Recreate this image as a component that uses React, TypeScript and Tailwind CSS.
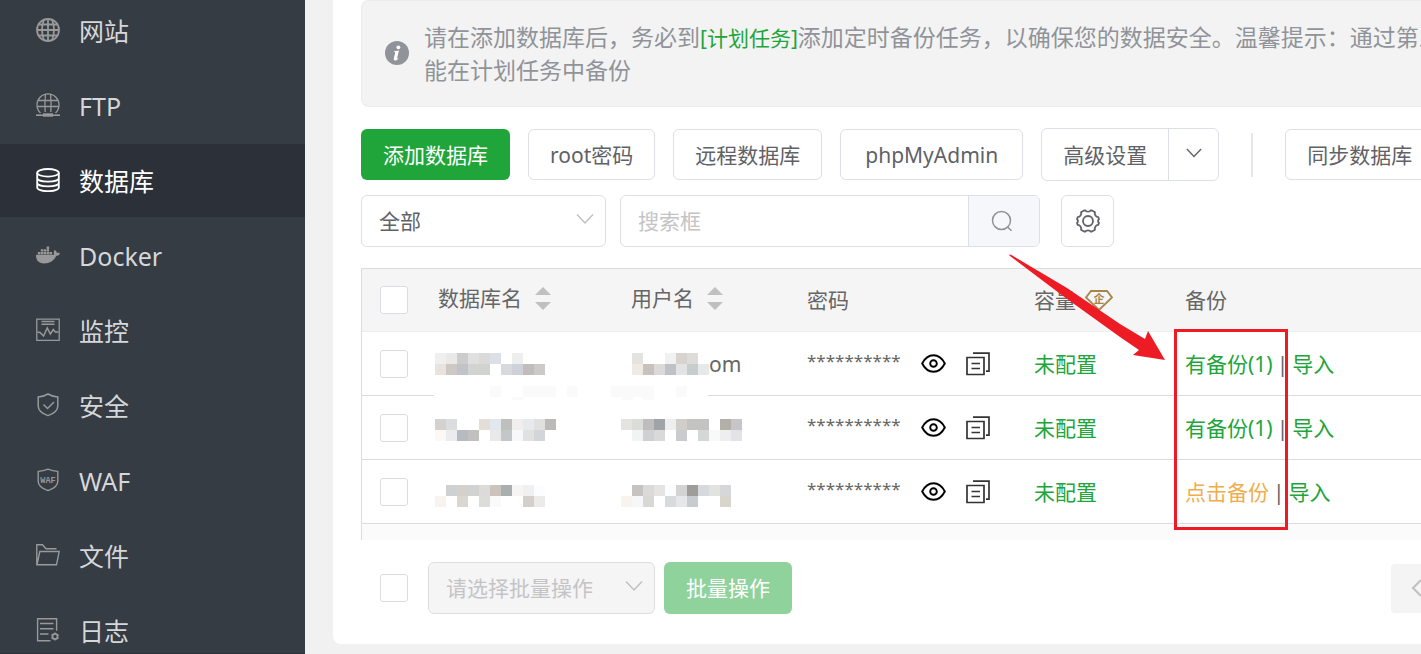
import React, { useState } from 'react';
import { FaDocker } from 'react-icons/fa';

type Cell = string | null;

interface Database {
  id: number;
  name: Cell[][];
  user: Cell[][];
  suffix?: string;
  backups: number;
}

const databases: Database[] = [
  {
    id: 1,
    name: [
      ['#efefef', '#e9e9e9', '#cdcccc', '#e0e0e0', '#dbdad9', '#dce0e6', null, '#eeeeee'],
      ['#e8e3df', '#cdc8c4', '#c0c3c7', '#d3d4d2', '#d0d3d0', null, '#d7d9dd', '#ced1d7', '#bfbebc', '#cbcac8'],
    ],
    user: [
      [null, '#e3e3e2', null, null, '#f1f1f1', '#d8d3cf', '#dddcd9'],
      [null, '#eeebe4', '#c7c3bc', '#dbdad8', '#bfc1c6', '#e2e3e4', '#c7cccd', '#e7e8ea'],
    ],
    suffix: 'om',
    backups: 1,
  },
  {
    id: 2,
    name: [
      ['#d3d2d0', '#dadcde', null, null, '#e3ded8', '#e3e8f0', '#bfbfbe', '#f0efee', '#e7eaec', '#e0e0e0', '#bbbab8'],
      ['#fef8f4', '#ebecee', '#b7bac0', '#c2c1bf', null, '#e9e9e9', '#c3c7c8', '#f6f8fa', '#e0e1e1', '#d2d6d9'],
    ],
    user: [
      ['#e4e3e0', '#dcdcdb', '#bfbebc', '#a0a4a8', '#eeeeef', '#d1cdc9', '#c3c3c1', '#c3c3c1', null, '#b3b0aa', '#c7c5c7'],
      [null, '#f2f4f3', '#cfd0d2', '#d9d9d9', null, '#c9cbce', null, '#d5d7d6', '#f8f9f9', '#eeeeee', '#e2e2e7'],
    ],
    backups: 1,
  },
  {
    id: 3,
    name: [
      [null, '#cfd0d1', '#d4d0cc', '#d0d3d1', '#dcdbd7', '#cac4bc', '#a9afb0', '#f7f5f3', '#f0f0f0', '#fcfdfe'],
      ['#f8f3ee', null, '#dad6d1', null, '#dcdcdb', '#fafafa', null, null, '#d3cfca', '#ecebe9'],
    ],
    user: [
      [null, '#c5c4c2', '#dadada', '#e5e4e2', '#fbfcfe', '#d3d3d3', '#9e9d9a', '#d8d9db', '#e2e3df', '#d5d7d8'],
      ['#f7f3ed', '#f5f7f8', '#d8d8d7', null, '#d8dadd', '#e5e7e9', '#c9ccce', null, null, '#d8d4ce'],
    ],
    backups: 0,
  },
];

const iconProps = {
  viewBox: '0 0 24 24',
  className: 'w-6 h-6 mb-0.5 shrink-0',
  fill: 'none',
  stroke: 'currentColor',
  'aria-hidden': true,
};

const GlobeIcon = () => (
  <svg {...iconProps} strokeWidth={1.8}>
    <circle cx="12" cy="12" r="11" />
    <path d="M12 1v22M1 12h22M2.500 6.500h19M2.500 17.500h19M8 1.500C5.500 8 5.500 16 8 22.500M16 1.500c2.500 6.500 2.500 14.500 0 21" />
  </svg>
);

const FtpIcon = () => (
  <svg {...iconProps} strokeWidth={1.3}>
    <path d="M4.500 20A11 11 0 1 1 19.500 20M9.500 1.500C8.800 7 8.800 14 9.200 19M14.500 1.500c.7 5.500.7 12.500.3 17.500M2 7.500h20M1 13.500h22" />
    <path d="M0 22.200h24" strokeWidth={1.600} />
    <path d="M7 22h10" strokeWidth={3.400} />
  </svg>
);

const DatabaseIcon = () => (
  <svg {...iconProps} strokeWidth={1.8}>
    <ellipse cx="12" cy="4.800" rx="10.800" ry="3.800" />
    <path d="M1.200 4.800v14.600c0 2.200 4.800 3.800 10.800 3.800s10.800-1.600 10.800-3.800V4.800M1.200 10c0 2.100 4.800 3.600 10.800 3.600S22.800 12.100 22.800 10M1.200 14.800c0 2.100 4.800 3.600 10.800 3.600s10.800-1.500 10.800-3.600" />
  </svg>
);

const MonitorIcon = () => (
  <svg {...iconProps} strokeWidth={1.3}>
    <path d="M.8 1.200h22.400v21.200H.8z" />
    <path d="M5.500 3.500h13M5.500 6.200h13" strokeWidth={1.600} />
    <path d="M1.500 14l2.500.5 3.500 3.500 3.800-8 3 6 3-4.500 2 2.500h3.200" strokeWidth={1.500} />
  </svg>
);

const ShieldIcon = () => (
  <svg {...iconProps} strokeWidth={1.5}>
    <path d="M12 1c3 1.800 6.500 2.800 9.800 3v9c0 4.500-5 8-9.800 9.600C7.200 21 2.200 17.500 2.200 13V4C5.500 3.800 9 2.800 12 1z" />
    <path d="M7.500 11.500l4 4 6.500-6.500" />
  </svg>
);

const WafIcon = () => (
  <svg {...iconProps} strokeWidth={1.4}>
    <path d="M12 1.200c3 1.200 6.500 2 9.800 2.200v10c0 4.500-5 7.500-9.800 9.300-4.800-1.800-9.800-4.800-9.800-9.300v-10c3.300-.2 6.800-1 9.800-2.200z" />
    <text x="12" y="14.500" textAnchor="middle" fontSize="8.500" fontWeight="700" fontFamily="Liberation Mono, monospace" fill="currentColor" stroke="none">
      WAF
    </text>
  </svg>
);

const FolderIcon = () => (
  <svg {...iconProps} strokeWidth={1.4}>
    <path d="M20.500 5.800H10L6.500 1.800H.8v20H20.500L23.200 8.500H3.800L1 21.800" />
  </svg>
);

const LogIcon = () => (
  <svg {...iconProps} strokeWidth={1.4}>
    <path d="M14.500 22.800H1.600V.8h19v12M4 5.500h13.500M4 10.800h13.500M4 16h8.500" />
    <circle cx="19" cy="18.500" r="2.600" strokeWidth={1.800} />
    <path d="M19 14.500v1.500M19 21v1.500M15.500 16.500l1.300.8M21.200 19.700l1.300.8M15.500 20.500l1.300-.8M21.200 17.300l1.300-.8" />
  </svg>
);

const menu = [
  { label: '网站', icon: <GlobeIcon /> },
  { label: 'FTP', icon: <FtpIcon /> },
  { label: '数据库', icon: <DatabaseIcon />, active: true },
  { label: 'Docker', icon: <FaDocker className="w-6 h-6 mb-0.5 shrink-0" /> },
  { label: '监控', icon: <MonitorIcon /> },
  { label: '安全', icon: <ShieldIcon /> },
  { label: 'WAF', icon: <WafIcon /> },
  { label: '文件', icon: <FolderIcon /> },
  { label: '日志', icon: <LogIcon /> },
];

const Sidebar: React.FC = () => (
  <aside className="w-[305px] shrink-0 bg-[#353c44] overflow-hidden border-b border-[#2c3038]">
    <nav className="-mt-1.5 flex flex-col gap-0.5">
      {menu.map((item) => (
        <a
          key={item.label}
          href="#"
          className={`flex items-center gap-[19px] h-[73px] shrink-0 pl-9 text-[25px] ${
            item.active ? 'bg-[#2c3038] text-white' : 'text-[#999999]'
          }`}
        >
          {item.icon}
          <span className={item.active ? 'text-white' : 'text-[#d6d7d9]'}>{item.label}</span>
        </a>
      ))}
    </nav>
  </aside>
);

const Chevron: React.FC<{ className?: string }> = ({ className }) => (
  <svg viewBox="0 0 18 12" className={className} fill="none" stroke="currentColor" strokeWidth={1.5} aria-hidden="true">
    <path d="M1 1.500l8 8.500 8-8.500" />
  </svg>
);

// the 11px grid runs over the whole table, so it drifts against the 64px rows
const Mosaic: React.FC<{ rows: Cell[][]; shift: number }> = ({ rows, shift }) => {
  const cols = Math.max(...rows.map((r) => r.length));
  return (
    <svg width={cols * 11} height={rows.length * 11} className="shrink-0 overflow-visible" shapeRendering="crispEdges" aria-hidden="true">
      {rows.map((row, y) =>
        row.map((fill, x) => fill && <rect key={`${x}-${y}`} x={x * 11} y={y * 11 + shift} width={11} height={11} fill={fill} />)
      )}
    </svg>
  );
};

const SortIcon = () => (
  <svg width="16" height="23" viewBox="0 0 16 23" fill="#c0c0c0" aria-hidden="true">
    <path d="M8 0l8 8H0zM8 23l8-8H0z" />
  </svg>
);

const Checkbox: React.FC<{ label: string }> = ({ label }) => (
  <input
    type="checkbox"
    aria-label={label}
    className="block appearance-none w-7 h-7 shrink-0 rounded-[3px] border border-[#dcdce6] bg-white checked:bg-[#20a53a]"
  />
);

const buttonClass = 'h-[51px] shrink-0 rounded-md border border-[#dcdfe6] bg-white text-[#606266]';

const App: React.FC = () => {
  const [filter, setFilter] = useState('全部');
  const [keyword, setKeyword] = useState('');

  return (
    <div
      className="flex h-screen overflow-hidden bg-[#f1f1f2] text-[21px] leading-8 text-[#666666] whitespace-nowrap"
      style={{ fontFamily: '"Noto Sans", "Noto Sans CJK SC", sans-serif' }}
    >
      <Sidebar />

      <main className="flex-1 min-w-0 pl-7">
        <div className="relative pl-7 pb-[30px] bg-white rounded-bl-lg overflow-hidden">
          <div className="flex items-center gap-[15px] pl-[23px] py-5 border border-r-0 border-[#ebebeb] rounded-l-lg bg-[#f3f3f3] text-[23px] text-[#909399]">
            <svg width="24" height="24" viewBox="0 0 24 24" className="mb-0.5 shrink-0" aria-hidden="true">
              <circle cx="12" cy="12" r="12" fill="#909399" />
              <circle cx="13.400" cy="6.300" r="1.900" fill="#fff" />
              <path d="M9.200 10.200l4.800-.7-1.900 7.600c-.2.900.4.800 1.800-.6-.9 2-2.300 3-3.700 2.900-1.300-.1-1.700-1-1.300-2.500l1.200-4.700c.2-.8-.1-1-1.200-1.200z" fill="#fff" />
            </svg>
            <p>
              请在添加数据库后，务必到
              <a href="#" className="text-[21px] text-[#20a53a]">[计划任务]</a>
              添加定时备份任务，以确保您的数据安全。温馨提示：通过第三
              <br />
              能在计划任务中备份
            </p>
          </div>

          <div className="mt-[21px] flex items-center gap-[18px]">
            <button className="h-[51px] px-[22px] shrink-0 rounded-md bg-[#20a53a] text-white">添加数据库</button>
            <button className={`${buttonClass} px-[21px]`}>root密码</button>
            <button className={`${buttonClass} px-[21px]`}>远程数据库</button>
            <button className={`${buttonClass} px-6`}>phpMyAdmin</button>
            <div className="flex h-[53px] shrink-0 rounded-md border border-[#dcdfe6] text-[#606266]">
              <button className="px-[21px]">高级设置</button>
              <button aria-label="更多设置" className="flex items-center justify-center w-[50px] border-l border-[#dcdfe6]">
                <Chevron className="w-4 h-3 mb-1" />
              </button>
            </div>
            <div className="mx-3.5 w-0.5 h-11 shrink-0 bg-[#e6e6e6]" />
            <button className={`${buttonClass} px-[21px]`}>同步数据库</button>
          </div>

          <div className="mt-3.5 flex items-center">
            <div className="relative mr-3.5">
              <select
                aria-label="数据库分类"
                value={filter}
                onChange={(e) => setFilter(e.target.value)}
                className="block appearance-none w-[245px] h-[52px] pl-[17px] rounded-md border border-[#dcdfe6] bg-white text-[#606266]"
              >
                <option>全部</option>
              </select>
              <Chevron className="absolute right-3 top-[18px] w-[18px] h-3 text-[#c0c0c0] pointer-events-none" />
            </div>
            <div className="flex w-[420px] h-[52px] rounded-md border border-[#dcdfe6] overflow-hidden">
              <input
                type="text"
                aria-label="搜索框"
                placeholder="搜索框"
                value={keyword}
                onChange={(e) => setKeyword(e.target.value)}
                className="flex-1 min-w-0 px-[17px] outline-none placeholder:text-[#c4c4c6]"
              />
              <button aria-label="搜索" className="flex items-center justify-center w-[71px] pr-1 border-l border-[#dcdfe6] bg-[#f5f7fa] text-[#909399]">
                <svg width="22" height="22" viewBox="0 0 22 22" fill="none" stroke="currentColor" strokeWidth={1.500}>
                  <circle cx="10.500" cy="10.500" r="9" />
                  <path d="M16.500 17l4 3.800" />
                </svg>
              </button>
            </div>
            <button aria-label="设置" className="flex items-center justify-center ml-[21px] w-[53px] h-[52px] rounded-md border border-[#dcdfe6] text-[#606266]">
              <svg width="24" height="24" viewBox="0 0 24 24" fill="none" stroke="currentColor" strokeWidth={1.800} strokeLinejoin="round">
                <circle cx="12" cy="12" r="5" />
                <path d="M8 1.500h1.500c.5 1.500 4.500 1.500 5 0H16l3 1.700c-.8 2.300 1 4.800 3.300 4.900l.7 2.200c-1.300.8-1.300 2.600 0 3.400l-.7 2.200c-2.300.1-4.100 2.600-3.300 4.900l-3 1.700h-1.500c-.5-1.500-4.500-1.500-5 0H8l-3-1.700c.8-2.300-1-4.800-3.300-4.900L1 13.700c1.300-.8 1.300-2.600 0-3.400l.7-2.200C4 8 5.800 5.500 5 3.200z" />
              </svg>
            </button>
          </div>

          <div className="relative mt-[21px]">
            <div className="border-l border-t border-[#dcdcdc]">
              <table className="w-full table-fixed border-separate border-spacing-0 text-left">
                <colgroup>
                  <col className="w-[58px]" />
                  <col className="w-[193px]" />
                  <col className="w-[176px]" />
                  <col className="w-[227px]" />
                  <col className="w-[151px]" />
                  <col />
                </colgroup>
                <thead>
                  <tr className="h-[63px] bg-[#f5f5f6] [&>th]:border-b [&>th]:border-[#ebeef5] [&>th]:pl-[18px] [&>th]:font-normal">
                    <th><Checkbox label="全选" /></th>
                    <th>
                      <div className="flex items-center gap-[13px] pb-1">数据库名<SortIcon /></div>
                    </th>
                    <th>
                      <div className="flex items-center gap-[13px] pb-1">用户名<SortIcon /></div>
                    </th>
                    <th>密码</th>
                    <th>
                      <div className="flex items-center gap-[9px]">
                        容量
                        <svg width="28" height="21" viewBox="0 0 28 21" fill="none" stroke="#a6864a" strokeWidth={1.800} aria-hidden="true">
                          <path d="M6 1h16l5 6.500L14 20 1 7.500z" />
                          <text x="14" y="12.500" textAnchor="middle" fontSize="11" fontWeight="700" fill="#a6864a" stroke="none">企</text>
                        </svg>
                      </div>
                    </th>
                    <th>备份</th>
                  </tr>
                </thead>
                <tbody>
                  {databases.map((db, i) => (
                    <tr key={db.id} className="h-16 [&>td]:border-b [&>td]:border-[#dcdcdc] [&>td]:pl-[18px]">
                      <td><Checkbox label={`选择 ${db.id}`} /></td>
                      <td>
                        <div className="-ml-[3px]"><Mosaic rows={db.name} shift={i * 2} /></div>
                      </td>
                      <td>
                        <div className="flex items-center -ml-2.5"><Mosaic rows={db.user} shift={i * 2} />{db.suffix}</div>
                      </td>
                      <td>
                        <div className="flex items-center">
                          <span className="w-[114px] pb-1.5 text-[17px]">**********</span>
                          <button aria-label="显示密码" className="mr-5 text-black">
                            <svg width="25" height="19" viewBox="0 0 25 19" fill="none" stroke="currentColor" strokeWidth={1.900}>
                              <path d="M1.200 9.500C4 4 8 1.300 12.500 1.300S21 4 23.800 9.500C21 15 17 17.700 12.500 17.700S4 15 1.200 9.500z" />
                              <circle cx="12.500" cy="9.500" r="3.300" />
                            </svg>
                          </button>
                          <button aria-label="复制密码" className="text-[#333333]">
                            <svg width="24" height="24" viewBox="0 0 24 24" fill="none" stroke="currentColor" strokeWidth={1.700}>
                              <path d="M1 5.500h17v17H1zM7 1.200h16v18h-3M5.500 11.500h8.500M5.500 16.500h8.500" />
                            </svg>
                          </button>
                        </div>
                      </td>
                      <td><a href="#" className="text-[#20a53a]">未配置</a></td>
                      <td>
                        {db.backups > 0 ? (
                          <a href="#" className="text-[#20a53a]">有备份({db.backups})</a>
                        ) : (
                          <a href="#" className="text-[#f0ad4e]">点击备份</a>
                        )}
                        <span className="mx-1">|</span>
                        <a href="#" className="text-[#20a53a]">导入</a>
                      </td>
                    </tr>
                  ))}
                </tbody>
              </table>
              <div className="h-4 rounded-tl bg-[#fbfbfb]" />
            </div>

            {/* smudge over the first row divider */}
            <svg width="274" height="14" viewBox="0 0 274 14" className="absolute left-[73px] top-[118px]" shapeRendering="crispEdges" aria-hidden="true">
              <path d="M0 0h274v14H0z" fill="#fff" />
              <path d="M56 0h11v11H56zM89 0h33v11H89zM133 0h11v11h-11zM177 0h43v11h-43zM242 0h11v11h-11zM78 11h11v3H78zM188 11h11v3h-11zM209 11h11v3h-11z" fill="#fafafa" />
            </svg>

            {/* red callout: arrow and frame round the backup column */}
            <svg width="280" height="276" viewBox="0 0 280 276" className="absolute left-[648px] -top-[14px] pointer-events-none" aria-hidden="true">
              <path d="M0 .5L2 .8 58 34 111 70 136 85 139 77 156 106 124 101 130 96 111 83 54 42 1 2z" fill="#ed1c24" />
              <path d="M166.500 76.500h111v198h-111z" fill="none" stroke="#ed1c24" strokeWidth={3} />
            </svg>
          </div>

          <div className="mt-[22px] pl-[19px] flex items-center">
            <Checkbox label="批量全选" />
            <div className="relative ml-5 mr-[9px]">
              <select
                disabled
                aria-label="批量操作类型"
                className="block appearance-none w-[227px] h-[52px] pl-[17px] rounded-md border border-[#dcdfe0] bg-[#f5f5f5] text-[#c4c4c6] opacity-100"
              >
                <option>请选择批量操作</option>
              </select>
              <Chevron className="absolute right-3 top-[18px] w-[18px] h-3 text-[#c0c0c0] pointer-events-none" />
            </div>
            <button disabled className="h-[52px] px-[22px] rounded-md bg-[#8fd29c] text-white">批量操作</button>
            <button aria-label="上一页" className="ml-auto w-[30px] h-[49px] pl-5 overflow-hidden rounded-l-sm bg-[#f4f4f5] text-[#c0c0c0]">
              <svg width="12" height="18" viewBox="0 0 12 18" fill="none" stroke="currentColor" strokeWidth={2}>
                <path d="M10 1L2 9l8 8" />
              </svg>
            </button>
          </div>
        </div>
      </main>
    </div>
  );
};

export default App;
